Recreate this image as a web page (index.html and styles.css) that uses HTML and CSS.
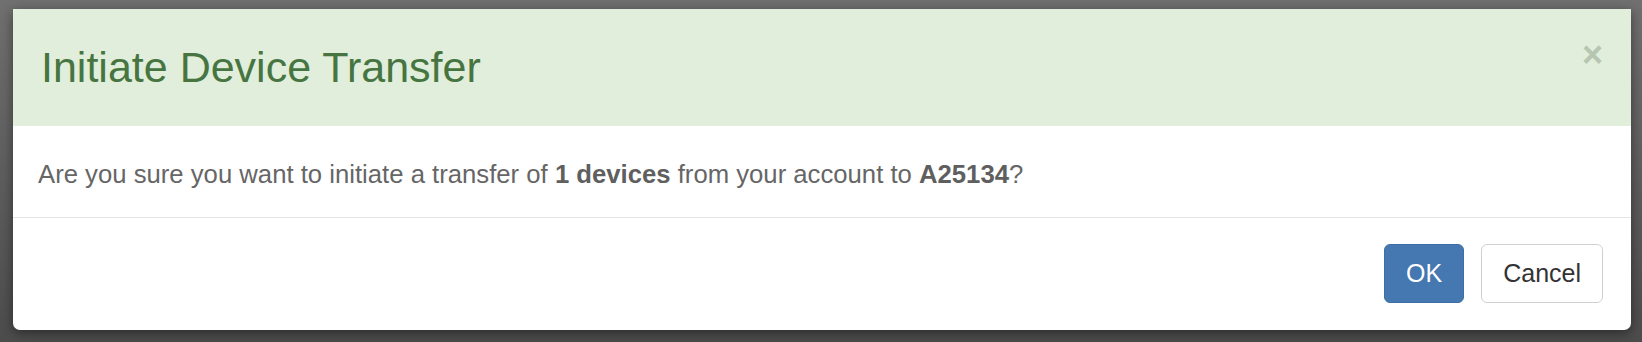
FILE: index.html
```html
<!DOCTYPE html>
<html lang="en">
<head>
    <meta charset="UTF-8">
    <title>Initiate Device Transfer</title>
    <link rel="stylesheet" href="styles.css">
</head>
<body>
    <div class="backdrop">
        <div class="modal">
            <div class="modal-header">
                <h4 class="modal-title">Initiate Device Transfer</h4>
                <button class="close" type="button">&times;</button>
            </div>
            <div class="modal-body">
                <p>Are you sure you want to initiate a transfer of <b>1 devices</b> from your account to <b>A25134</b>?</p>
            </div>
            <div class="modal-footer">
                <button class="btn btn-primary" type="button">OK</button>
                <button class="btn btn-default" type="button">Cancel</button>
            </div>
        </div>
    </div>
</body>
</html>
```

FILE: styles.css
```css
/* modal de confirmacion de transferencia */
html, body {
    margin: 0;
    height: 100%;
}

body {
    font-family: "Liberation Sans", Arial, sans-serif;
    background: linear-gradient(#707070, #4c4c4c);
}

.backdrop {
    padding: 9px 11px 0 13px;
    box-sizing: border-box;
    height: 100%;
}

.modal {
    background-color: #fff;
    border-radius: 0 0 7px 7px;
    box-shadow: 0 3px 12px rgba(0,0,0,0.45);
    overflow: hidden;
}

.modal-header {
    background-color: #e0eedb;
    padding: 35px 28px 36px 28px;
    display: flex;
    justify-content: space-between;
    align-items: flex-start;
}

.modal-title {
    margin: 0;
    font-size: 43px;
    line-height: 46px;
    font-weight: normal;
    color: #477541;
}

.close {
    background: none;
    border: none;
    padding: 0;
    margin: -7px 0 0 0;
    font-family: "Liberation Sans", Arial, sans-serif;
    font-size: 36px;
    line-height: 36px;
    font-weight: bold;
    color: #b6c6b0;
    cursor: pointer;
}

.modal-body {
    padding: 30px 25px 25px 25px;
    border-bottom: 1px solid #e5e5e5;
}

.modal-body p {
    margin: 0;
    font-size: 25.7px;
    line-height: 36px;
    color: #666;
}

.modal-body b {
    color: #5f5f5f;
}

.modal-footer {
    padding: 26px 28px 27px 28px;
    display: flex;
    justify-content: flex-end;
    gap: 17px;
}

.btn {
    font-family: "Liberation Sans", Arial, sans-serif;
    font-size: 25px;
    height: 59px;
    padding: 0 21px;
    border-radius: 6px;
    border: 1px solid transparent;
    cursor: pointer;
}

.btn-primary {
    background-color: #4577b1;
    border-color: #3f6ea6;
    color: #fff;
}

.btn-default {
    background-color: #fff;
    border-color: #d0d0d0;
    color: #333;
}
```
